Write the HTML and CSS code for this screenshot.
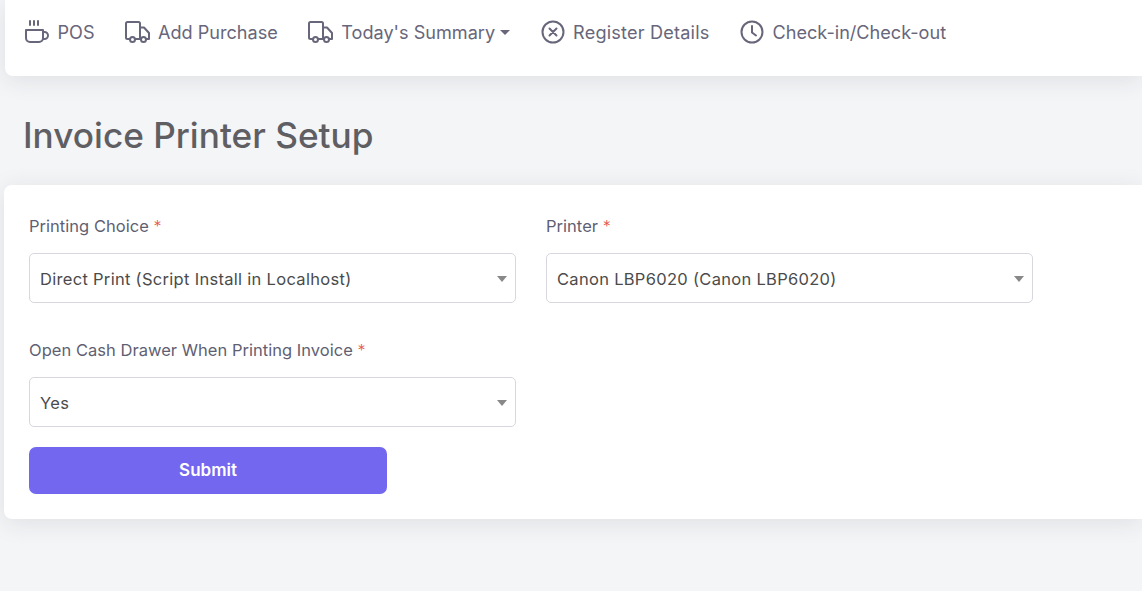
FILE: index.html
```html
<!DOCTYPE html>
<html lang="en">
<head>
<meta charset="utf-8">
<title>Invoice Printer Setup</title>
<link rel="stylesheet" href="styles.css">
</head>
<body>
<nav class="topbar">
  <a class="nav-item"><svg class="icon" viewBox="0 0 26 26"><path d="M2 11h17v8a4 4 0 0 1-4 4H6a4 4 0 0 1-4-4zM19 13h1.500a3.500 3.500 0 0 1 0 7H19M6 2v4M10 2v4M14 2v4"/></svg>POS</a>
  <a class="nav-item nav-wide"><svg class="icon" viewBox="0 0 26 26"><path d="M5.500 20H3.500A1.500 1.500 0 0 1 2 18.500V4.500A1.500 1.500 0 0 1 3.500 3h11A1.500 1.500 0 0 1 16 4.500V20h-5M16 8.500h4l5 5.500V20h-3M16 20h1"/><circle cx="8.500" cy="20.500" r="2.500"/><circle cx="19.500" cy="20.500" r="2.500"/></svg>Add Purchase</a>
  <a class="nav-item nav-wide"><svg class="icon" viewBox="0 0 26 26"><path d="M5.500 20H3.500A1.500 1.500 0 0 1 2 18.500V4.500A1.500 1.500 0 0 1 3.500 3h11A1.500 1.500 0 0 1 16 4.500V20h-5M16 8.500h4l5 5.500V20h-3M16 20h1"/><circle cx="8.500" cy="20.500" r="2.500"/><circle cx="19.500" cy="20.500" r="2.500"/></svg>Today's Summary<span class="caret"></span></a>
  <a class="nav-item nav-register"><svg class="icon" viewBox="0 0 26 26"><circle cx="13" cy="13" r="10.500"/><path d="M9.500 9.500l7 7M16.500 9.500l-7 7"/></svg>Register Details</a>
  <a class="nav-item"><svg class="icon" viewBox="0 0 26 26"><circle cx="13" cy="13" r="10.500"/><path d="M13 7v6.500l4 3"/></svg>Check-in/Check-out</a>
</nav>
<h1 class="page-title">Invoice Printer Setup</h1>
<main class="card">
  <form class="form-grid">
    <div class="field">
      <label class="field-label">Printing Choice <span class="req">*</span></label>
      <div class="select">Direct Print (Script Install in Localhost)<span class="select-arrow"></span></div>
    </div>
    <div class="field">
      <label class="field-label">Printer <span class="req">*</span></label>
      <div class="select">Canon LBP6020 (Canon LBP6020)<span class="select-arrow"></span></div>
    </div>
    <div class="field">
      <label class="field-label">Open Cash Drawer When Printing Invoice <span class="req">*</span></label>
      <div class="select">Yes<span class="select-arrow"></span></div>
    </div>
  </form>
  <button class="submit" type="button">Submit</button>
</main>
</body>
</html>
```

FILE: styles.css
```css
* { box-sizing: border-box; }
html, body { height: 100%; }
body {
  margin: 0;
  overflow: hidden;
  background: #f4f5f7;
  font-family: Inter, "Liberation Sans", sans-serif;
  color: #67667a;
}
.topbar {
  display: flex;
  align-items: center;
  gap: 29.5px;
  height: 76px;
  margin-left: 5px;
  padding: 0 0 12px 19px;
  background: #fff;
  border-radius: 0 0 0 8px;
  box-shadow: 0 4px 24px rgba(34, 41, 47, 0.1);
  font-size: 18.1px;
}
.nav-item {
  display: flex;
  align-items: center;
  gap: 7.5px;
}
.nav-wide { gap: 8px; }
.nav-register { letter-spacing: 0.2px; }
.icon {
  width: 26px;
  height: 26px;
  fill: none;
  stroke: #67667a;
  stroke-width: 2;
  stroke-linecap: round;
  stroke-linejoin: round;
}
.caret {
  width: 0;
  height: 0;
  margin-left: -3px;
  border-left: 5px solid transparent;
  border-right: 5px solid transparent;
  border-top: 5px solid #67667a;
}
.page-title {
  margin: 38px 0 29px 23px;
  font-size: 35.2px;
  line-height: 42px;
  font-weight: 500;
  color: #5e5e63;
}
.card {
  margin-left: 4px;
  height: 334px;
  padding: 30px 25px 0;
  background: #fff;
  border-radius: 8px 0 0 8px;
  box-shadow: 0 4px 24px rgba(34, 41, 47, 0.1);
}
.form-grid {
  display: grid;
  grid-template-columns: 487px 487px;
  column-gap: 30px;
  row-gap: 36px;
}
.field-label {
  display: block;
  height: 22px;
  margin-bottom: 16px;
  font-size: 16.5px;
  letter-spacing: 0.03px;
  line-height: 22px;
  color: #5f5f73;
}
.req {
  color: #e5534b;
  font-size: 16px;
  font-weight: 300;
}
.select {
  position: relative;
  height: 50px;
  padding-left: 10px;
  border: 1px solid #d8d6de;
  border-radius: 5px;
  font-size: 16.5px;
  letter-spacing: 0.3px;
  line-height: 50px;
  color: #4b4b4b;
}
.select-arrow {
  position: absolute;
  right: 8px;
  top: 22px;
  width: 0;
  height: 0;
  border-left: 5px solid transparent;
  border-right: 5px solid transparent;
  border-top: 6px solid #888;
}
.submit {
  display: block;
  width: 358px;
  height: 47px;
  margin-top: 20px;
  padding: 0 0 2px;
  border: 0;
  border-radius: 7px;
  background: #7367f0;
  color: #fff;
  font-family: inherit;
  font-size: 17px;
  font-weight: 600;
}
```
